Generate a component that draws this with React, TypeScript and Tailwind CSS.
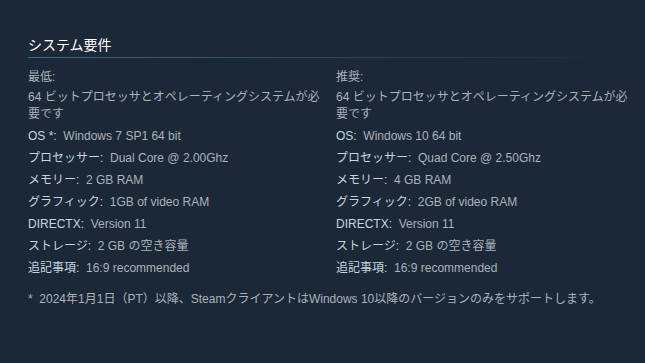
import React from 'react';

type Req = { label: string; value: string };

const minimum: Req[] = [
    { label: 'OS *:', value: 'Windows 7 SP1 64 bit' },
    { label: 'プロセッサー:', value: 'Dual Core @ 2.00Ghz' },
    { label: 'メモリー:', value: '2 GB RAM' },
    { label: 'グラフィック:', value: '1GB of video RAM' },
    { label: 'DirectX:', value: 'Version 11' },
    { label: 'ストレージ:', value: '2 GB の空き容量' },
    { label: '追記事項:', value: '16:9 recommended' },
];

const recommended: Req[] = [
    { label: 'OS:', value: 'Windows 10 64 bit' },
    { label: 'プロセッサー:', value: 'Quad Core @ 2.50Ghz' },
    { label: 'メモリー:', value: '4 GB RAM' },
    { label: 'グラフィック:', value: '2GB of video RAM' },
    { label: 'DirectX:', value: 'Version 11' },
    { label: 'ストレージ:', value: '2 GB の空き容量' },
    { label: '追記事項:', value: '16:9 recommended' },
];

const Column: React.FC<{ title: string; items: Req[] }> = ({ title, items }) => (
    <div className="w-[300px] shrink-0">
        <div className="leading-[18px] mb-[3px]">{title}</div>
        <ul className="flex flex-col gap-[4px]">
            <li className="leading-[17px]">64 ビットプロセッサとオペレーティングシステムが必要です</li>
            {items.map((it, i) => (
                <li key={i} className="leading-[18px]">
                    <span className={`text-[#c6d4df] ${it.label === 'DirectX:' ? 'uppercase' : ''}`}>{it.label}</span>
                    {'\u00a0 '}{it.value}
                </li>
            ))}
        </ul>
    </div>
);

export default function App() {
    return (
        <div
            className="w-[645px] h-[363px] overflow-hidden bg-[#1b2838] text-[#acb2b8] text-[12px] px-[28px] pt-[36px]"
            style={{ fontFamily: '"Liberation Sans", "Noto Sans CJK JP", sans-serif' }}
        >
            <h2 className="text-white text-[14px] leading-[18px]">システム要件</h2>
            <div className="h-px mt-[3px] w-[592px] bg-gradient-to-r from-[#3a6a88] to-[#1b2838]" />
            <div className="flex gap-[8px] mt-[10px]">
                <Column title="最低:" items={minimum} />
                <Column title="推奨:" items={recommended} />
            </div>
            <p className="mt-[13px] leading-[18px] whitespace-nowrap">
                * &nbsp;2024年1月1日（PT）以降、SteamクライアントはWindows 10以降のバージョンのみをサポートします。
            </p>
        </div>
    );
}
